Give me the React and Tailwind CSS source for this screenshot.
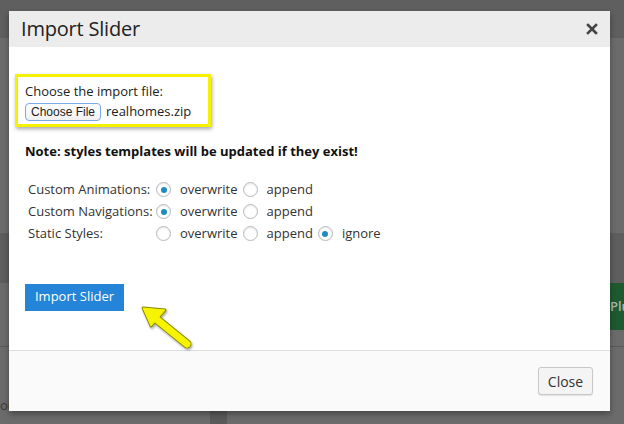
import React from "react";

function Radio({ checked }) {
  return (
    <span className="inline-flex h-[15px] w-[15px] items-center justify-center rounded-full border border-[#b4b9be] bg-white shadow-[inset_0_1px_2px_rgba(0,0,0,0.1)]">
      {checked && <span className="h-[6px] w-[6px] rounded-full bg-[#1e8cbe]" />}
    </span>
  );
}

function Row({ label, options }) {
  return (
    <div className="flex h-[22px] items-center">
      <span className="w-[128px]">{label}</span>
      {options.map((o, i) => (
        <span key={i} className="flex items-center">
          <Radio checked={o.checked} />
          <span className={"ml-[9px] " + (i < options.length - 1 ? "mr-[5px]" : "")}>{o.label}</span>
        </span>
      ))}
    </div>
  );
}

export default function App() {
  return (
    <div className="relative h-[424px] w-[624px] overflow-hidden bg-[#6b6b6b] font-['Open_Sans',sans-serif] text-[#333]">
      {/* background page */}
      <div className="h-[38px] bg-[#5f5f5f]" />
      <div className="mt-[195px] h-[50px] bg-[#5e5e5e]" />
      <div className="flex justify-end">
        <div className="flex h-[47px] w-[15px] items-center overflow-hidden bg-[#1e5a2f] pl-[1px] text-[13px] font-semibold text-[#a9b7ad]">Plugin</div>
      </div>
      <div className="mt-[16px] h-px bg-[#5a5a5a]" />
      <div className="mt-[52px] w-[12px] overflow-hidden text-[13px] text-[#3a3a3a] leading-none">ou</div>
      <div className="absolute bottom-0 left-[210px] h-[13px] w-[17px] bg-[#5a5a5a]" />

      {/* modal */}
      <div className="absolute left-[9px] top-[11px] flex h-[400px] w-[601px] flex-col bg-white shadow-[0_3px_6px_rgba(0,0,0,0.35)]">
        <div className="flex h-[36px] items-center justify-between bg-[#ececec] pl-[12px] pr-[12px]">
          <span className="text-[20px] text-[#222] tracking-[-0.2px]">Import Slider</span>
          <svg width="12" height="12" viewBox="0 0 12 12">
            <path d="M2 2 L10 10 M10 2 L2 10" stroke="#444" strokeWidth="2.6" strokeLinecap="square" />
          </svg>
        </div>
        <div className="relative flex-1 px-[16px] text-[13px]">
          <div className="ml-[-10px] mt-[27px] h-[53px] w-[196px] border-[3px] border-[#f4f200] pl-[7px] pt-[5px] shadow-[1px_2px_4px_rgba(0,0,0,0.35)]">
            <div className="text-[13px] leading-[18px] text-[#222]">Choose the import file:</div>
            <div className="mt-[2px] flex items-center">
              <span className="flex h-[18px] items-center rounded-[4px] border border-[#7aa7e6] bg-gradient-to-b from-white to-[#f0f0f0] px-[5px] text-[12px] text-[#222] font-['Liberation_Sans',sans-serif]">Choose File</span>
              <span className="ml-[5px] text-[13px] text-[#222]">realhomes.zip</span>
            </div>
          </div>
          <div className="mt-[15px] text-[13px] font-bold text-[#111]">Note: styles templates will be updated if they exist!</div>
          <div className="mt-[17px] pl-[3px] text-[13px] text-[#333]">
            <Row label="Custom Animations:" options={[{ label: "overwrite", checked: true }, { label: "append" }]} />
            <Row label="Custom Navigations:" options={[{ label: "overwrite", checked: true }, { label: "append" }]} />
            <Row label="Static Styles:" options={[{ label: "overwrite" }, { label: "append" }, { label: "ignore", checked: true }]} />
          </div>
          <button className="mt-[39px] h-[27px] w-[99px] bg-[#2384d8] text-[13px] text-white">Import Slider</button>
          <svg className="absolute left-[126px] top-[249px]" width="64" height="56" viewBox="0 0 64 56">
            <defs>
              <filter id="sh" x="-20%" y="-20%" width="150%" height="150%">
                <feDropShadow dx="1" dy="1.5" stdDeviation="1" floodColor="#000" floodOpacity="0.35" />
              </filter>
            </defs>
            <g filter="url(#sh)">
              <path d="M52 48 L20 22" stroke="#8a8a00" strokeWidth="9" strokeLinecap="round" />
              <path d="M8 12 L30 14 L16 30 Z" fill="#8a8a00" stroke="#8a8a00" strokeWidth="3" strokeLinejoin="round" />
              <path d="M52 48 L20 22" stroke="#f6f400" strokeWidth="7" strokeLinecap="round" />
              <path d="M8 12 L30 14 L16 30 Z" fill="#f6f400" stroke="#f6f400" strokeWidth="1" strokeLinejoin="round" />
            </g>
          </svg>
        </div>
        <div className="flex h-[61px] items-center justify-end border-t border-[#dcdcdc] bg-[#fafafa] pr-[17px]">
          <button className="h-[28px] w-[55px] rounded-[3px] border border-[#c8c8c8] bg-[#f4f4f4] text-[14px] text-[#333] shadow-[0_1px_1px_rgba(0,0,0,0.1)]">Close</button>
        </div>
      </div>
    </div>
  );
}
